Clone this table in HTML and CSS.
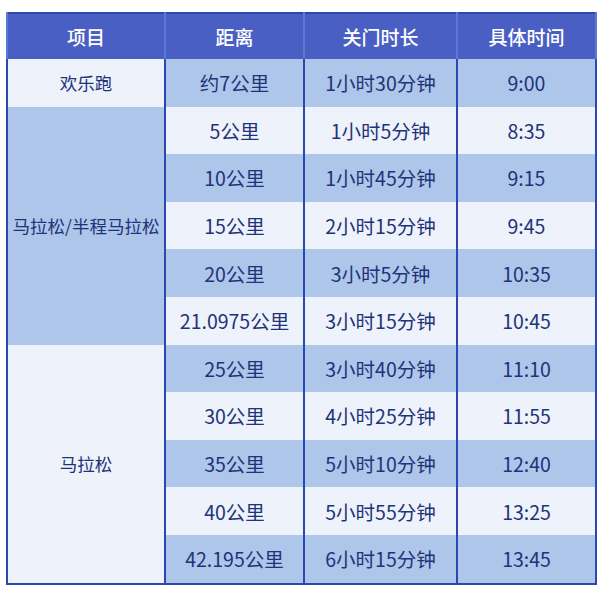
FILE: index.html
```html
<!DOCTYPE html>
<html lang="zh">
<head>
<meta charset="utf-8">
<link rel="stylesheet" href="styles.css">
</head>
<body>
<table class="tbl">
  <colgroup>
    <col class="c1"><col class="c2"><col class="c3"><col class="c4">
  </colgroup>
  <thead>
    <tr class="hd"><th>项目</th><th>距离</th><th>关门时长</th><th>具体时间</th></tr>
  </thead>
  <tbody>
    <tr class="odd"><td class="cat light">欢乐跑</td><td>约7公里</td><td>1小时30分钟</td><td>9:00</td></tr>
    <tr class="even"><td class="cat mid" rowspan="5">马拉松/半程马拉松</td><td>5公里</td><td>1小时5分钟</td><td>8:35</td></tr>
    <tr class="odd"><td>10公里</td><td>1小时45分钟</td><td>9:15</td></tr>
    <tr class="even"><td>15公里</td><td>2小时15分钟</td><td>9:45</td></tr>
    <tr class="odd"><td>20公里</td><td>3小时5分钟</td><td>10:35</td></tr>
    <tr class="even"><td>21.0975公里</td><td>3小时15分钟</td><td>10:45</td></tr>
    <tr class="odd"><td class="cat light" rowspan="5">马拉松</td><td>25公里</td><td>3小时40分钟</td><td>11:10</td></tr>
    <tr class="even"><td>30公里</td><td>4小时25分钟</td><td>11:55</td></tr>
    <tr class="odd"><td>35公里</td><td>5小时10分钟</td><td>12:40</td></tr>
    <tr class="even"><td>40公里</td><td>5小时55分钟</td><td>13:25</td></tr>
    <tr class="odd"><td>42.195公里</td><td>6小时15分钟</td><td>13:45</td></tr>
  </tbody>
</table>
</body>
</html>
```
FILE: styles.css
```css
html, body {
  margin: 0;
  padding: 0;
  background: #ffffff;
}
body {
  padding: 12px 0 0 6px;
  font-family: "Noto Sans CJK SC", "Noto Sans", sans-serif;
}
.tbl {
  border-collapse: collapse;
  border: 2px solid #2a48ad;
  width: 589px;
  table-layout: fixed;
}
.c1 { width: 158px; }
.c2 { width: 139px; }
.c3 { width: 153px; }
.c4 { width: 139px; }
.tbl th, .tbl td {
  padding: 0;
  text-align: center;
  vertical-align: middle;
  border-left: 2px solid #2a48ad;
  border-right: 2px solid #2a48ad;
}
.hd th {
  height: 45px;
  background: #4a5fc3;
  color: #ffffff;
  font-size: 19px;
  font-weight: 500;
  border-left-color: #5a78d6;
  border-right-color: #5a78d6;
}
.tbl td {
  height: 47.6px;
  font-size: 19.5px;
  color: #1f3379;
}
.odd td { background: #adc6e9; }
.even td { background: #eef2fa; }
.tbl td.cat {
  font-size: 17.5px;
  color: #1f3379;
}
.tbl td.light { background: #eef2fa; }
.tbl td.mid { background: #adc6e9; }
```
